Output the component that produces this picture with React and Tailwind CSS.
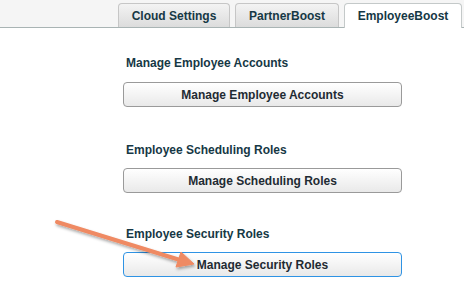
const tabs = [
  { label: 'Cloud Settings', width: 'w-[112px]' },
  { label: 'PartnerBoost', width: 'w-[104px]' },
  { label: 'EmployeeBoost', width: 'w-[118px]', active: true },
]

function Section({ title, button, focused, className, gap }) {
  return (
    <div className={className}>
      <h2 className="pl-[3px] text-[12px] leading-[14px] font-bold text-[#163845]">{title}</h2>
      <button
        type="button"
        className={
          'flex h-[25px] w-[279px] items-center justify-center rounded-[4px] border bg-gradient-to-b from-white to-[#e9e9e9] text-[12px] font-bold text-[#1f2b33] ' +
          gap +
          (focused ? ' border-[#2f93e4]' : ' border-[#9a9a9a]')
        }
      >
        {button}
      </button>
    </div>
  )
}

function App() {
  return (
    <div className="relative h-[289px] w-[464px] overflow-hidden bg-white font-['Liberation_Sans',Arial,sans-serif]">
      <div className="flex h-[28px] items-end gap-[5px] border-b border-[#a9b4b4] bg-[#f5f5f5] pl-[118px]">
        {tabs.map((tab) => (
          <div
            key={tab.label}
            className={
              'flex h-[24px] items-center justify-center rounded-t-[4px] border border-b-0 text-[12px] font-bold text-[#163845] ' +
              tab.width +
              (tab.active
                ? ' -mb-px h-[25px] border-[#c4c9c9] bg-white'
                : ' border-[#c6c6c6] bg-gradient-to-b from-[#f3f3f3] to-[#dcdcdc]')
            }
          >
            {tab.label}
          </div>
        ))}
      </div>

      <div className="pl-[123px]">
        <Section className="pt-[28px]" gap="mt-[12px]" title="Manage Employee Accounts" button="Manage Employee Accounts" />
        <Section className="pt-[36px]" gap="mt-[11px]" title="Employee Scheduling Roles" button="Manage Scheduling Roles" />
        <Section className="pt-[34px]" gap="mt-[11px]" title="Employee Security Roles" button="Manage Security Roles" focused />
      </div>

      <svg className="pointer-events-none absolute left-0 top-0" width="464" height="289">
        <defs>
          <filter id="shadow" x="-20%" y="-50%" width="140%" height="200%">
            <feDropShadow dx="1" dy="2" stdDeviation="1.5" floodColor="#000" floodOpacity="0.35" />
          </filter>
        </defs>
        <g filter="url(#shadow)" fill="#ef8a63" stroke="#ef8a63">
          <line x1="57" y1="222" x2="180" y2="260" strokeWidth="4" strokeLinecap="round" />
          <polygon points="194,264 176,267 181,252" strokeWidth="1" strokeLinejoin="round" />
        </g>
      </svg>
    </div>
  )
}

export default App
